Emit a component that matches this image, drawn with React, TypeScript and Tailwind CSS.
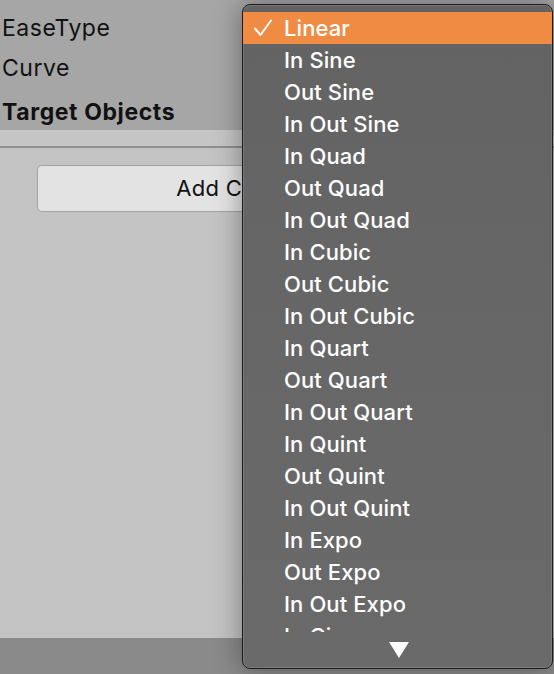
import React from "react";

const easeTypes = [
  "Linear",
  "In Sine",
  "Out Sine",
  "In Out Sine",
  "In Quad",
  "Out Quad",
  "In Out Quad",
  "In Cubic",
  "Out Cubic",
  "In Out Cubic",
  "In Quart",
  "Out Quart",
  "In Out Quart",
  "In Quint",
  "Out Quint",
  "In Out Quint",
  "In Expo",
  "Out Expo",
  "In Out Expo",
  "In Circ",
  "Out Circ",
];

function CheckMark() {
  return (
    <svg width="22" height="20" viewBox="0 0 22 20" className="shrink-0">
      <polyline
        points="3,10.5 8.5,17 19,2.5"
        fill="none"
        stroke="white"
        strokeWidth="2"
        strokeLinecap="round"
        strokeLinejoin="round"
      />
    </svg>
  );
}

function EaseMenu({ selected }: { selected: string }) {
  return (
    <div className="absolute left-[242px] top-[4px] flex h-[665px] w-[311px] flex-col overflow-hidden rounded-[8px] border border-[#1c1c1c] bg-gradient-to-b from-[#636363] to-[#6a6a6a] pt-[7px] shadow-[0_0_28px_rgba(0,0,0,0.38),inset_0_0_0_1px_rgba(255,255,255,0.12)]">
      <div className="h-[620px] overflow-hidden text-[22px] font-medium tracking-[0.1px]">
        {easeTypes.map((name) => {
          const active = name === selected;
          return (
            <div
              key={name}
              className={
                active
                  ? "flex h-[32px] items-center bg-[#ef8b43] pl-[9px] text-white"
                  : "flex h-[32px] items-center pl-[41px] text-white"
              }
            >
              {active && (
                <span className="mr-[10px] flex">
                  <CheckMark />
                </span>
              )}
              <span className="leading-none">{name}</span>
            </div>
          );
        })}
      </div>
      <div className="flex flex-1 items-center justify-center pl-[2px]">
        <svg width="20" height="16" viewBox="0 0 20 16">
          <polygon points="0,0 20,0 10,16" fill="white" />
        </svg>
      </div>
    </div>
  );
}

export default function App() {
  return (
    <div
      className="relative h-[674px] w-[554px] overflow-hidden bg-[#c3c3c3] text-[23px] tracking-[0.5px] text-[#111]"
      style={{ fontFamily: "Inter, 'Noto Sans', sans-serif" }}
    >
      <div className="flex h-[130px] flex-col bg-[#a6a6a6] pt-[8px]">
        <div className="flex h-[40px] items-center pl-[2px]">
          <span>EaseType</span>
        </div>
        <div className="flex h-[40px] items-center pl-[2px]">
          <span>Curve</span>
        </div>
        <div className="flex h-[42px] items-center pl-[2px] pt-[7px] font-bold tracking-[0.6px]">
          Target Objects
        </div>
      </div>
      <div className="h-[18px] border-b-2 border-[#8f8f8f] bg-[#c5c5c5]" />
      <div className="flex h-[490px] flex-col pt-[17px]">
        <button className="ml-[37px] flex h-[47px] w-[452px] items-center justify-center rounded-[5px] border border-[#a3a3a3] bg-[#e3e3e3] text-[22px] tracking-[0.3px] text-[#111]">
          Add Component
        </button>
      </div>
      <div className="h-[36px] bg-[#8a8a8a]" />
      <EaseMenu selected="Linear" />
    </div>
  );
}
